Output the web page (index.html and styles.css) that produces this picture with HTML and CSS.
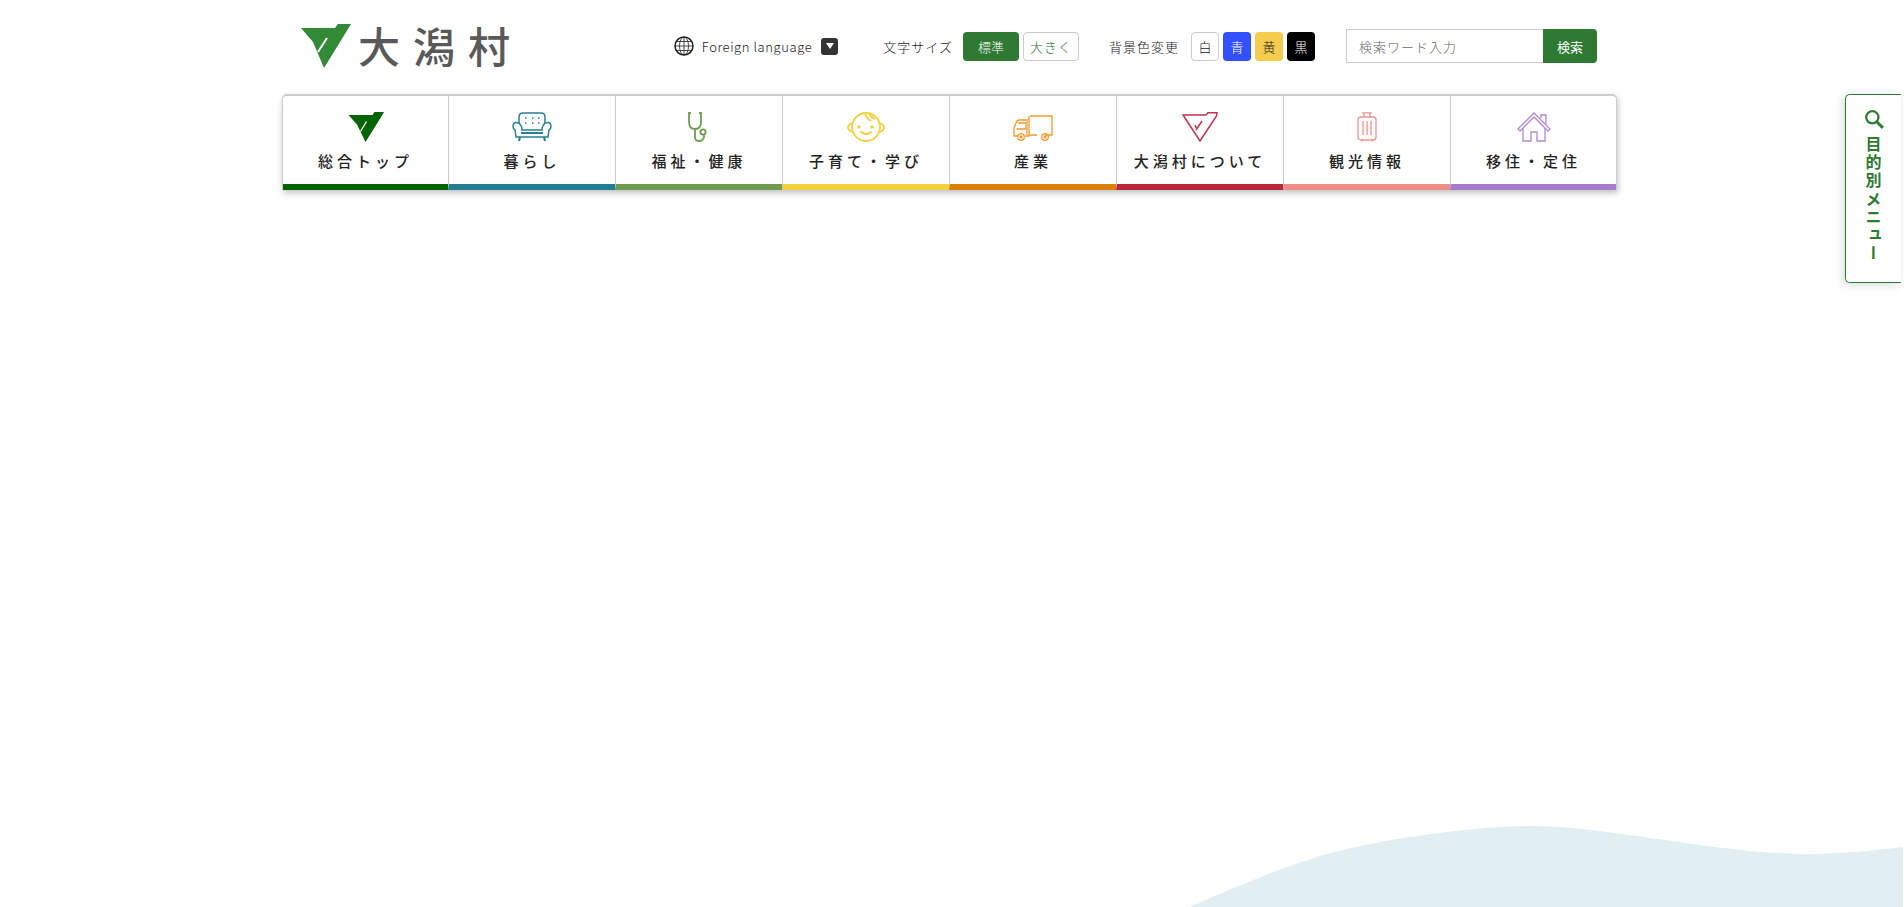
FILE: index.html
```html
<!DOCTYPE html>
<html lang="ja">
<head>
    <meta charset="utf-8">
    <title>大潟村</title>
    <link rel="stylesheet" href="styles.css">
</head>
<body>
<header class="header">
    <a class="logo" href="#">
        <svg class="logo-mark" viewBox="0 0 50 44"><path d="M0 4H34L37 0H50L47 5L23 44L12 18Z" fill="#338a36"/><path d="M26 14L17 28" stroke="#fff" stroke-width="2"/></svg>
        <span class="logo-text">大潟村</span>
    </a>
    <div class="tools">
        <div class="lang">
            <svg class="globe" viewBox="0 0 20 20" fill="none" stroke="#222"><circle cx="10" cy="10" r="9" stroke-width="1.5"/><ellipse cx="10" cy="10" rx="4.500" ry="9" stroke-width=".8"/><path d="M10 1V19M1 10H19M2.500 5.500H17.500M2.500 14.500H17.500" stroke-width=".8"/></svg>
            <span>Foreign language</span>
            <span class="lang-arrow"><i></i></span>
        </div>
        <div class="tool-group size-group">
            <span class="tool-label">文字サイズ</span>
            <a class="btn btn-active" href="#">標準</a>
            <a class="btn btn-large" href="#">大きく</a>
        </div>
        <div class="tool-group color-group">
            <span class="tool-label">背景色変更</span>
            <a class="swatch swatch-white" href="#">白</a>
            <a class="swatch swatch-blue" href="#">青</a>
            <a class="swatch swatch-yellow" href="#">黄</a>
            <a class="swatch swatch-black" href="#">黒</a>
        </div>
        <form class="search">
            <input type="text" placeholder="検索ワード入力">
            <button type="button">検索</button>
        </form>
    </div>
</header>

<nav class="gnav">
    <a class="gnav-item c-top" href="#">
        <svg viewBox="0 0 36 30"><path d="M.500 3H24.500L26.500 0H36L34 3.500L17.500 30L9 12.500Z" fill="#006400"/><path d="M18.500 9.500L12.500 19.500" stroke="#fff" stroke-width="1.300"/></svg>
        <span>総合トップ</span>
    </a>
    <a class="gnav-item c-life" href="#">
        <svg viewBox="0 0 40 30" fill="none" stroke="#2a7f94" stroke-width="1.500"><path d="M7 11V5Q7 1 11 1H29Q33 1 33 5V11"/><path d="M10 18Q10 14 7 11Q1 9 1 14Q1 17 3 18L4 25H36L37 18Q39 17 39 14Q39 9 33 11Q30 14 30 18Z"/><path d="M9 21H31" stroke-width="2"/><path d="M8 25L7 29M32 25L33 29" stroke-width="2"/><path d="M13 6h1.500M20 6h1.500M26 6h1.500M13 11h1.500M20 11h1.500M26 11h1.500"/></svg>
        <span>暮らし</span>
    </a>
    <a class="gnav-item c-health" href="#">
        <svg viewBox="0 0 40 30" fill="none" stroke="#6f9c4f" stroke-width="1.800"><path d="M12 1H10V10Q10 17 16 17Q22 17 22 10V1H20"/><path d="M16 17V25Q16 29 20 29Q24 29 25 25V23"/><circle cx="24" cy="20" r="2.600"/></svg>
        <span>福祉・健康</span>
    </a>
    <a class="gnav-item c-child" href="#">
        <svg viewBox="0 0 38 30" fill="none" stroke="#f4cf3e" stroke-width="1.800"><ellipse cx="19" cy="15" rx="14" ry="14"/><path d="M5 11Q1 13 1 15.500Q1 18 5 20M33 11Q37 13 37 15.500Q37 18 33 20"/><path d="M18 1Q19 6 24 9M23 2Q23 5 28 7"/><path d="M14 20Q19 24 24 20" stroke-linecap="round"/><circle cx="12" cy="15" r=".8"/><circle cx="25" cy="15" r=".8"/></svg>
        <span>子育て・学び</span>
    </a>
    <a class="gnav-item c-industry" href="#">
        <svg viewBox="0 0 40 30" fill="none" stroke="#f09a2c" stroke-width="1.300"><path d="M17 4H39V23H32M24 23H16" /><path d="M16 8H6Q4 8 3 11L1 16V24H5M12 24H16V4" /><path d="M5 11H13V17H3.500"/><circle cx="8" cy="25" r="3.300"/><circle cx="8" cy="25" r="1"/><circle cx="32" cy="25" r="3.300"/><circle cx="32" cy="25" r="1"/><path d="M14.500 8V23" stroke-width="3" stroke="#f5bf7c"/></svg>
        <span>産業</span>
    </a>
    <a class="gnav-item c-village" href="#">
        <svg viewBox="0 0 36 30" fill="none" stroke="#c0344f" stroke-width="1.500"><path d="M1 3H24L26 .8H35L34.500 4L18 29Z"/><path d="M20 9L14 18M13 13L15 17"/></svg>
        <span>大潟村について</span>
    </a>
    <a class="gnav-item c-tour" href="#">
        <svg viewBox="0 0 20 30" fill="none" stroke="#ee928b" stroke-width="1.300"><path d="M5 .8H15M7 1V5M13 1V5"/><rect x="1" y="5" width="18" height="23" rx="3"/><path d="M6 9V23M10 9V23M14 9V23"/><path d="M5 28V29.500M15 28V29.500"/></svg>
        <span>観光情報</span>
    </a>
    <a class="gnav-item c-move" href="#">
        <svg viewBox="0 0 34 30" fill="none" stroke="#b08ad2" stroke-width="1.300"><path d="M1 17L17 1L33 17L31 19L17 5L3 19Z"/><path d="M24 6V3H29V12"/><path d="M6 16V29H14V20H20V29H28V16"/></svg>
        <span>移住・定住</span>
    </a>
</nav>

<a class="side-tab" href="#">
    <svg viewBox="0 0 18 18" fill="none" stroke="#2e7a32"><circle cx="7.500" cy="7.500" r="5.500" stroke-width="2"/><path d="M11.500 11.500L17 17" stroke-width="2.600"/></svg>
    <span>目的別メニュー</span>
</a>

<main class="content"></main>

<svg class="wave" viewBox="0 0 715 81" preserveAspectRatio="none"><path d="M0 81C30 68 95 40 138 28C185 15 280 0 343 0C420 0 530 28 619 28C655 28 690 24 715 21V81Z" fill="#e1eff3"/></svg>
</body>
</html>
```

FILE: styles.css
```css
html, body {
    margin: 0;
    padding: 0;
    height: 100%;
}
body {
    display: flex;
    flex-direction: column;
    overflow: hidden;
    position: relative;
    background-color: #fff;
    color: #222;
    font-family: "Noto Sans CJK JP", "Noto Sans", sans-serif;
}
a {
    text-decoration: none;
    color: inherit;
}
.header {
    display: flex;
    align-items: center;
    justify-content: space-between;
    width: 1296px;
    height: 94px;
    margin-left: 301px;
    box-sizing: border-box;
    padding-bottom: 2px;
}
.logo {
    display: flex;
    align-items: center;
    gap: 7px;
}
.logo-mark {
    width: 50px;
    height: 44px;
}
.logo-text {
    font-size: 42px;
    font-weight: 500;
    letter-spacing: 13px;
    color: #595959;
    line-height: 1;
    margin-top: -3px;
}
.tools {
    display: flex;
    align-items: center;
    font-size: 13px;
    font-weight: 300;
}
.lang {
    display: flex;
    align-items: center;
    gap: 8px;
    margin-right: 45px;
    letter-spacing: 0.6px;
}
.globe {
    width: 20px;
    height: 20px;
}
.lang-arrow {
    display: flex;
    align-items: center;
    justify-content: center;
    width: 17px;
    height: 17px;
    margin-left: 1px;
    background-color: #333;
    border-radius: 3px;
}
.lang-arrow i {
    border-top: 6px solid #fff;
    border-left: 4px solid transparent;
    border-right: 4px solid transparent;
}
.tool-group {
    display: flex;
    align-items: center;
    gap: 4px;
}
.tool-label {
    margin-right: 6px;
    letter-spacing: 1px;
    color: #222;
}
.color-group .tool-label {
    margin-right: 8px;
}
.size-group {
    margin-right: 30px;
}
.color-group {
    margin-right: 31px;
}
.btn, .swatch {
    display: flex;
    align-items: center;
    justify-content: center;
    box-sizing: border-box;
    height: 29px;
    border-radius: 4px;
}
.btn {
    width: 56px;
}
.btn-active {
    background-color: #2e7a32;
    color: #fff;
}
.btn-large {
    border: 1px solid #ccc;
    color: #2e7a32;
    letter-spacing: 1px;
}
.swatch {
    width: 28px;
}
.swatch-white {
    border: 1px solid #ccc;
}
.swatch-blue {
    background-color: #3350ff;
    color: #fff;
}
.swatch-yellow {
    background-color: #f5cc4c;
}
.swatch-black {
    background-color: #000;
    color: #fff;
}
.search {
    display: flex;
    margin: 0;
}
.search input {
    box-sizing: border-box;
    width: 197px;
    height: 34px;
    padding: 0 12px;
    border: 1px solid #ccc;
    border-right: none;
    border-radius: 0;
    font-family: inherit;
    font-size: 13px;
    font-weight: 300;
    letter-spacing: 1px;
}
.search input::placeholder {
    color: #666;
}
.search button {
    width: 54px;
    height: 34px;
    border: none;
    border-radius: 0 4px 4px 0;
    background-color: #2e7a32;
    color: #fff;
    font-family: inherit;
    font-size: 13px;
}
.gnav {
    display: flex;
    box-sizing: border-box;
    width: 1335px;
    height: 96px;
    margin-left: 282px;
    border: 1px solid #ccc;
    border-top-width: 2px;
    border-bottom: none;
    border-radius: 5px 5px 0 0;
    background-color: #fff;
    box-shadow: 1px 3px 6px rgba(0, 0, 0, 0.25);
}
.gnav-item {
    flex: 0 0 167px;
    display: flex;
    flex-direction: column;
    align-items: center;
    box-sizing: border-box;
    padding-top: 16px;
    border-left: 1px solid #ccc;
    border-bottom: 6px solid;
}
.gnav-item:first-child {
    flex-basis: 165px;
    border-left: none;
}
.gnav-item:last-child {
    flex-basis: 166px;
}
.gnav-item svg {
    height: 30px;
    width: 40px;
}
.gnav-item span {
    margin-top: 8px;
    font-size: 15px;
    font-weight: 500;
    letter-spacing: 4px;
    line-height: 22px;
    color: #222;
}
.c-top { border-bottom-color: #006400; }
.c-life { border-bottom-color: #217f94; }
.c-health { border-bottom-color: #6f9c4f; }
.c-child { border-bottom-color: #f4cf3e; }
.c-industry { border-bottom-color: #dd8004; }
.c-village { border-bottom-color: #b9283f; }
.c-tour { border-bottom-color: #ee8d86; }
.c-move { border-bottom-color: #a67dcc; }
.side-tab {
    position: absolute;
    top: 94px;
    right: 3px;
    display: flex;
    flex-direction: column;
    align-items: center;
    box-sizing: border-box;
    width: 56px;
    height: 189px;
    padding-top: 14px;
    border: 1px solid #2e7a32;
    border-right: none;
    border-radius: 5px 0 0 5px;
    background-color: #fff;
    box-shadow: -2px 2px 8px rgba(0, 0, 0, 0.15);
    color: #2e7a32;
}
.side-tab svg {
    width: 20px;
    height: 20px;
}
.side-tab span {
    margin-top: 7px;
    writing-mode: vertical-rl;
    font-size: 16px;
    font-weight: 700;
    line-height: 1;
    letter-spacing: 2.200px;
}
.content {
    flex: 1;
}
.wave {
    align-self: flex-end;
    width: 714px;
    height: 81px;
    margin-right: 1px;
}
```
